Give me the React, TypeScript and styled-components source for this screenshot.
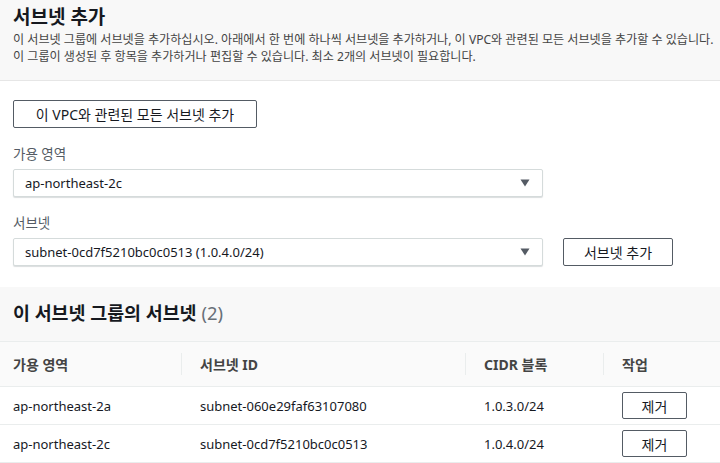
import styled, { createGlobalStyle } from "styled-components";

const GlobalStyle = createGlobalStyle`
  html, body {
    margin: 0;
    padding: 0;
    background: #fff;
  }
  body {
    font-family: "Noto Sans", "Noto Sans CJK KR", sans-serif;
    color: #16191f;
  }
`;

type Row = { zone: string; subnetId: string; cidr: string };

const rows: Row[] = [
  { zone: "ap-northeast-2a", subnetId: "subnet-060e29faf63107080", cidr: "1.0.3.0/24" },
  { zone: "ap-northeast-2c", subnetId: "subnet-0cd7f5210bc0c0513", cidr: "1.0.4.0/24" },
];

const Arrow = () => (
  <svg width="10" height="8" viewBox="0 0 10 8">
    <path d="M0.5 0.5 L9.5 0.5 L5 7.5 Z" fill="#545b64" />
  </svg>
);

const App = () => {
  return (
    <>
      <GlobalStyle />
      <Page>
        <Header>
          <Title>서브넷 추가</Title>
          <Description>
            이 서브넷 그룹에 서브넷을 추가하십시오. 아래에서 한 번에 하나씩 서브넷을 추가하거나, 이 VPC와 관련된 모든 서브넷을 추가할 수 있습니다.
          </Description>
          <Description>
            이 그룹이 생성된 후 항목을 추가하거나 편집할 수 있습니다. 최소 2개의 서브넷이 필요합니다.
          </Description>
        </Header>

        <Form>
          <Button $width={244}>이 VPC와 관련된 모든 서브넷 추가</Button>

          <Field>
            <Label>가용 영역</Label>
            <Select>
              <span>ap-northeast-2c</span>
              <Arrow />
            </Select>
          </Field>

          <Field>
            <Label>서브넷</Label>
            <FieldRow>
              <Select>
                <span>subnet-0cd7f5210bc0c0513 (1.0.4.0/24)</span>
                <Arrow />
              </Select>
              <Button $width={110}>서브넷 추가</Button>
            </FieldRow>
          </Field>
        </Form>

        <TableSection>
          <TableTitle>
            이 서브넷 그룹의 서브넷 <Count>(2)</Count>
          </TableTitle>
          <Table>
            <HeadRow>
              <HeadCell $first>가용 영역</HeadCell>
              <HeadCell>서브넷 ID</HeadCell>
              <HeadCell>CIDR 블록</HeadCell>
              <HeadCell>작업</HeadCell>
            </HeadRow>
            {rows.map((r) => (
              <BodyRow key={r.subnetId}>
                <Cell $first>{r.zone}</Cell>
                <Cell>{r.subnetId}</Cell>
                <Cell>{r.cidr}</Cell>
                <Cell>
                  <SmallButton>제거</SmallButton>
                </Cell>
              </BodyRow>
            ))}
          </Table>
        </TableSection>
      </Page>
    </>
  );
};

export default App;

const Page = styled.div`
  width: 720px;
  height: 463px;
  overflow: hidden;
  display: flex;
  flex-direction: column;
`;

const Header = styled.div`
  background: #f8f8f8;
  border-bottom: 1px solid #e6e6e6;
  padding: 4px 13px 0;
  box-sizing: border-box;
  height: 81px;
`;

const Title = styled.h1`
  margin: 0 0 1px;
  font-size: 19px;
  font-weight: 700;
  line-height: 26px;
  color: #16191f;
`;

const Description = styled.p`
  margin: 0;
  font-size: 12.1px;
  line-height: 17px;
  color: #444;
  white-space: nowrap;
`;

const Form = styled.div`
  padding: 19px 13px 0;
  display: flex;
  flex-direction: column;
  align-items: flex-start;
  gap: 17px;
  height: 188px;
`;

const Button = styled.button<{ $width: number }>`
  width: ${(p) => p.$width}px;
  height: 28px;
  background: #fff;
  border: 1px solid #545b64;
  border-radius: 2px;
  font-family: "Noto Sans", "Noto Sans CJK KR", sans-serif;
  font-size: 14px;
  font-weight: 400;
  color: #16191f;
  padding: 0;
  flex-shrink: 0;
`;

const Field = styled.div`
  display: flex;
  flex-direction: column;
  gap: 6px;
  width: 100%;
`;

const Label = styled.div`
  font-size: 13.5px;
  line-height: 18px;
  color: #545b64;
`;

const FieldRow = styled.div`
  display: flex;
  align-items: center;
  gap: 20px;
`;

const Select = styled.div`
  width: 530px;
  height: 28px;
  box-sizing: border-box;
  border: 1px solid #d5dbdb;
  border-radius: 2px;
  box-shadow: 0 1px 1px rgba(0, 28, 36, 0.15);
  display: flex;
  align-items: center;
  justify-content: space-between;
  padding: 0 12px 0 11px;
  font-size: 13px;
  color: #16191f;
  background: #fff;
`;

const TableSection = styled.div`
  flex: 1;
  display: flex;
  flex-direction: column;
`;

const TableTitle = styled.h2`
  margin: 0;
  background: #f8f8f8;
  height: 55px;
  box-sizing: border-box;
  padding: 0 13px 4px;
  display: flex;
  align-items: center;
  gap: 5px;
  font-size: 18.4px;
  font-weight: 700;
  color: #16191f;
  border-bottom: 1px solid #eaeded;
`;

const Count = styled.span`
  font-weight: 400;
  color: #687078;
`;

const Table = styled.div`
  display: flex;
  flex-direction: column;
`;

const columns = "181px 284px 138px 1fr";

const HeadRow = styled.div`
  display: grid;
  grid-template-columns: ${columns};
  height: 44px;
  background: #fafafa;
  border-bottom: 1px solid #eaeded;
`;

const HeadCell = styled.div<{ $first?: boolean }>`
  display: flex;
  align-items: center;
  padding-left: ${(p) => (p.$first ? 13 : 19)}px;
  font-size: 14px;
  font-weight: 700;
  color: #444;
  position: relative;

  &::before {
    content: "";
    display: ${(p) => (p.$first ? "none" : "block")};
    position: absolute;
    left: 0;
    top: 11px;
    bottom: 11px;
    width: 1px;
    background: #eaeded;
  }
`;

const BodyRow = styled.div`
  display: grid;
  grid-template-columns: ${columns};
  height: 37px;
  border-bottom: 1px solid #eaeded;
`;

const Cell = styled.div<{ $first?: boolean }>`
  display: flex;
  align-items: center;
  padding-left: ${(p) => (p.$first ? 13 : 19)}px;
  font-size: 13px;
  color: #16191f;
`;

const SmallButton = styled.button`
  width: 65px;
  height: 27px;
  background: #fff;
  border: 1px solid #545b64;
  border-radius: 2px;
  font-family: "Noto Sans", "Noto Sans CJK KR", sans-serif;
  font-size: 14px;
  font-weight: 400;
  color: #16191f;
  padding: 0;
`;
